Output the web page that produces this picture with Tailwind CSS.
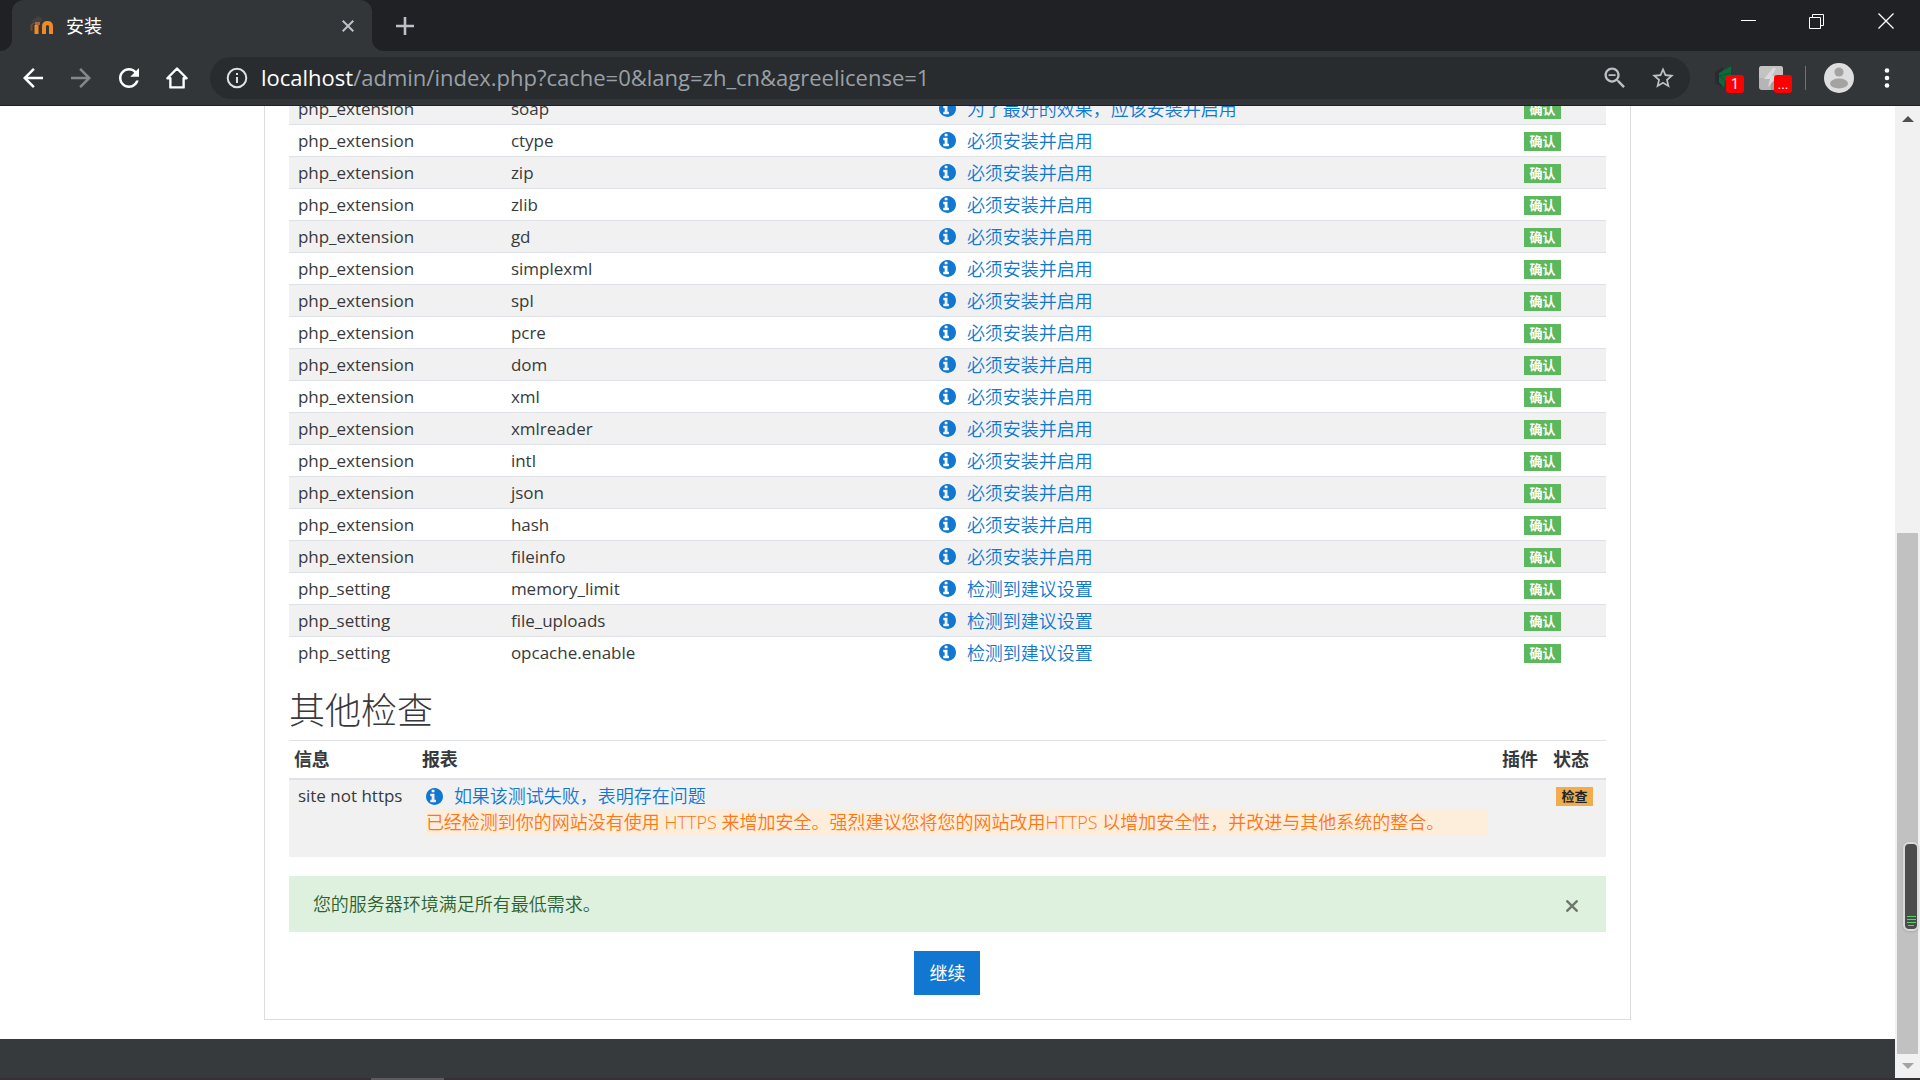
<!DOCTYPE html>
<html lang="zh-CN">
<head>
  <meta charset="UTF-8" />
  <meta name="viewport" content="width=device-width, initial-scale=1.0" />
  <title>安装</title>
  <script src="https://cdn.jsdelivr.net/npm/@tailwindcss/browser@4"></script>
</head>
<body class="h-screen overflow-hidden flex flex-col bg-white text-[#373a3c] text-[17px] font-['Open_Sans','Noto_Sans_CJK_SC',sans-serif]">

  <!-- info icon shared by every link -->
  <svg class="hidden">
    <symbol id="info" viewBox="128 128 1536 1536">
      <path d="M1024 1376v-160q0-14-9-23t-23-9h-96v-512q0-14-9-23t-23-9h-320q-14 0-23 9t-9 23v160q0 14 9 23t23 9h96v320h-96q-14 0-23 9t-9 23v160q0 14 9 23t23 9h448q14 0 23-9t9-23zM896 480v-160q0-14-9-23t-23-9h-192q-14 0-23 9t-9 23v160q0 14 9 23t23 9h192q14 0 23-9t9-23zM1664 896q0 209-103 385.500t-279.500 279.500-385.500 103-385.500-103-279.500-279.500-103-385.500 103-385.500 279.500-279.500 385.500-103 385.500 103 279.500 279.500 103 385.500z" fill="currentColor"/>
    </symbol>
  </svg>

  <!-- tab strip -->
  <header class="shrink-0 bg-[#323639] border-b border-[#202124]">
    <div class="flex h-[51px] bg-[#202124]">
      <div class="w-3 bg-[#323639]"><div class="h-full bg-[#202124] rounded-br-xl"></div></div>
      <div class="w-[360px] flex items-center pl-[18px] pr-3 bg-[#323639] rounded-t-xl text-white text-lg">
        <svg class="w-6 h-6 mr-3" viewBox="0 0 24 24" fill="none">
          <path d="M6.500 20v-9M14 20v-7.500q0-3.500 3.500-3.500t3.500 3.500V20" stroke="#f08a24" stroke-width="4"/>
          <path d="M1.500 17v-6l4-3" stroke="#6d4a35" stroke-width="2"/>
          <path d="M1 7l7-5 5 3-4 5-5-1z" fill="#45403f"/>
          <path d="M5 8h5v3H5z" fill="#a5683f"/>
        </svg>
        <span class="grow leading-6">安装</span>
        <button aria-label="关闭标签页" class="w-6 h-6 flex items-center justify-center">
          <svg class="w-3 h-3" viewBox="0 0 12 12" stroke="#bdc1c6" stroke-width="2"><path d="M.7.7l10.600 10.600M11.300.7L.7 11.300"/></svg>
        </button>
      </div>
      <div class="w-3 bg-[#323639]"><div class="h-full bg-[#202124] rounded-bl-xl"></div></div>
      <button aria-label="新标签页" class="w-[42px] flex items-center justify-center">
        <svg class="w-[18px] h-[18px]" viewBox="0 0 18 18" stroke="#bdc1c6" stroke-width="2.600"><path d="M9 0v18M0 9h18"/></svg>
      </button>
      <div class="ml-auto flex h-[41px] text-white">
        <button aria-label="最小化" class="w-[69px] flex items-center justify-center">
          <svg class="w-4 h-4" viewBox="0 0 16 16" stroke="currentColor"><path d="M1 7.500h15"/></svg>
        </button>
        <button aria-label="还原" class="w-[69px] flex items-center justify-center">
          <svg class="w-4 h-4" viewBox="0 0 16 16" fill="none" stroke="currentColor"><path d="M.5 4.500h11v11H.5zM3.500 4.500v-3h11v11h-3"/></svg>
        </button>
        <button aria-label="关闭" class="w-[69px] flex items-center justify-center">
          <svg class="w-4 h-4" viewBox="0 0 16 16" stroke="currentColor" stroke-width="1.300"><path d="M.5.5l15 15M15.500.5l-15 15"/></svg>
        </button>
      </div>
    </div>

    <!-- toolbar -->
    <div class="flex items-center h-[54px] pl-[9px] text-white">
      <button aria-label="后退" class="w-12 flex justify-center">
        <svg class="w-[30px] h-[30px]" viewBox="0 0 24 24" fill="currentColor"><path d="M20 11H7.830l5.590-5.590L12 4l-8 8 8 8 1.410-1.410L7.830 13H20v-2z"/></svg>
      </button>
      <button aria-label="前进" class="w-12 flex justify-center text-[#85888a]">
        <svg class="w-[30px] h-[30px]" viewBox="0 0 24 24" fill="currentColor"><path d="M12 4l-1.410 1.410L16.170 11H4v2h12.170l-5.580 5.590L12 20l8-8z"/></svg>
      </button>
      <button aria-label="重新加载" class="w-12 flex justify-center">
        <svg class="w-[30px] h-[30px]" viewBox="0 0 24 24" fill="currentColor"><path d="M17.650 6.350C16.200 4.900 14.210 4 12 4c-4.420 0-7.990 3.580-7.990 8s3.570 8 7.990 8c3.730 0 6.840-2.550 7.730-6h-2.080c-.82 2.330-3.040 4-5.650 4-3.310 0-6-2.690-6-6s2.690-6 6-6c1.660 0 3.140.69 4.220 1.780L13 11h7V4l-2.350 2.350z"/></svg>
      </button>
      <button aria-label="主页" class="w-12 flex justify-center">
        <svg class="w-[30px] h-[30px]" viewBox="0 0 24 24" fill="none" stroke="currentColor" stroke-width="1.900" stroke-linejoin="round"><path d="M4.300 12.200L12 4.400l7.700 7.800h-2.400v7.300H6.700v-7.300z"/></svg>
      </button>

      <div class="ml-[9px] grow flex items-center h-[42px] pl-[15px] pr-[15px] rounded-full bg-[#282c2f]">
        <svg class="w-6 h-6 text-[#dfe1e5]" viewBox="0 0 24 24" fill="none" stroke="currentColor" stroke-width="2"><circle cx="12" cy="12" r="9.300"/><path d="M12 11v6M12 7v2"/></svg>
        <div role="textbox" aria-label="地址" class="grow ml-3 pb-0.5 text-[22px] leading-7 text-[#9aa0a6]"><span class="text-white">localhost</span>/admin/index.php?cache=0&amp;lang=zh_cn&amp;agreelicense=1</div>
        <button aria-label="缩放" class="w-12 flex justify-center text-[#bdc1c6]">
          <svg class="w-7 h-7" viewBox="0 0 24 24" fill="currentColor"><path d="M15.500 14h-.79l-.28-.27C15.410 12.590 16 11.110 16 9.500 16 5.910 13.090 3 9.500 3S3 5.910 3 9.500 5.910 16 9.500 16c1.610 0 3.090-.59 4.230-1.570l.27.28v.79l5 4.990L20.490 19l-4.990-5zm-6 0C7.010 14 5 11.990 5 9.500S7.010 5 9.500 5 14 7.010 14 9.500 11.990 14 9.500 14zM6.500 8.700h6v1.500h-6z"/></svg>
        </button>
        <button aria-label="收藏" class="w-12 -mr-3 flex justify-center text-[#bdc1c6]">
          <svg class="w-[26px] h-[26px]" viewBox="0 0 24 24" fill="currentColor"><path d="M22 9.240l-7.190-.62L12 2 9.190 8.630 2 9.240l5.460 4.730L5.820 21 12 17.270 18.180 21l-1.630-7.030L22 9.240zM12 15.400l-3.760 2.270 1-4.280-3.320-2.880 4.380-.38L12 6.100l1.710 4.040 4.380.38-3.320 2.880 1 4.280L12 15.400z"/></svg>
        </button>
      </div>

      <div class="flex items-center w-[230px] pl-6 pr-[18px]">
        <button aria-label="扩展程序" class="relative w-[30px] h-[30px]">
          <svg class="w-6 h-6" viewBox="0 0 24 24"><path d="M1 6l8-5v4L5 8v7l5 7-9-5z" fill="#282c2f"/><path d="M17 0v12l-6 3-1 7-5-6V7z" fill="#0b6b3a"/><path d="M5 10l12-3M11 15L6 10" stroke="#0a5530"/></svg>
          <span class="absolute left-3 top-3 w-[18px] h-[18px] rounded-[3px] bg-[#f00] text-white text-sm leading-[18px] font-[Roboto,sans-serif]">1</span>
        </button>
        <button aria-label="扩展程序" class="relative ml-[15px] w-[30px] h-[30px]">
          <svg class="w-6 h-6" viewBox="0 0 24 24"><rect width="24" height="24" rx="3" fill="#b5b5b5"/><path d="M0 12V3q0-3 3-3h18q3 0 3 3v9z" fill="#c3c3c3"/><path d="M12 12h12v9q0 3-3 3h-9z" fill="#a0a0a0"/><path d="M14 2L5 13h6L9 21l10-11h-6l4-8z" fill="#dadada"/></svg>
          <span class="absolute left-[15px] top-3 w-[18px] h-[18px] rounded-[3px] bg-[#f00] text-white text-sm leading-[18px] font-[Roboto,sans-serif]">...</span>
        </button>
        <div class="ml-4 mr-[18px] w-px h-6 bg-[#6f7275]"></div>
        <button aria-label="用户" class="w-[30px] h-[30px]">
          <svg class="w-full h-full" viewBox="0 0 30 30"><circle cx="15" cy="15" r="15" fill="#dedede"/><circle cx="15" cy="9" r="4.600" fill="#a3a3a3"/><ellipse cx="15" cy="20.500" rx="9" ry="5" fill="#a3a3a3"/></svg>
        </button>
        <button aria-label="菜单" class="ml-auto w-[30px] h-[30px] flex justify-center">
          <svg class="h-full" viewBox="0 0 6 30" fill="currentColor"><circle cx="3" cy="7.500" r="2.300"/><circle cx="3" cy="15" r="2.300"/><circle cx="3" cy="22.500" r="2.300"/></svg>
        </button>
      </div>
    </div>
  </header>

  <div class="grow min-h-0 flex">
    <!-- page, scrolled to its end -->
    <div class="grow flex flex-col justify-end overflow-hidden">
      <main class="shrink-0 w-[72.15%] mx-auto mb-[19px] p-6 border border-[#dcdddf]">
        <table class="w-full table-fixed">
          <colgroup>
            <col class="w-[213px]" /><col class="w-[428px]" /><col /><col class="w-[91px]" />
          </colgroup>
          <tbody id="checks"></tbody>
        </table>

        <h2 class="mt-5 mb-[7px] text-4xl leading-[44px] font-light">其他检查</h2>
        <table class="w-full table-fixed border-t border-[#dee2e6]">
          <colgroup>
            <col class="w-[128px]" /><col /><col class="w-[51px]" /><col class="w-[58px]" />
          </colgroup>
          <thead>
            <tr class="h-[39px] border-b-2 border-[#dee2e6] text-left text-lg">
              <th class="px-[5px] py-0">信息</th>
              <th class="px-[5px] py-0">报表</th>
              <th class="px-[5px] py-0">插件</th>
              <th class="px-[5px] py-0">状态</th>
            </tr>
          </thead>
          <tbody>
            <tr class="bg-[#f1f1f1] align-top leading-[26px]">
              <td class="px-[9px] pt-[3px] whitespace-nowrap">site not https</td>
              <td class="px-[9px] pt-[3px] pb-[22px] text-lg leading-[26px] font-[350]">
                <a href="#" class="flex items-center text-[#1177d1]"><svg class="w-[17px] h-[17px] mr-[11px]"><use href="#info"/></svg>如果该测试失败，表明存在问题</a>
                <p class="bg-[#fdeedb] text-[#ff7518] whitespace-nowrap">已经检测到你的网站没有使用 <span class="font-light">HTTPS</span> 来增加安全。强烈建议您将您的网站改用<span class="font-light">HTTPS</span> 以增加安全性，并改进与其他系统的整合。</p>
              </td>
              <td></td>
              <td class="px-2 pt-[7px]"><span class="block w-[37px] h-[19px] bg-[#f0ad4e] text-[#212529] text-[13px] leading-[19px] font-bold text-center">检查</span></td>
            </tr>
          </tbody>
        </table>

        <div role="alert" class="mt-[19px] h-14 pl-6 pr-7 flex items-center justify-between bg-[#def1de] text-[#306030] text-lg font-[350]">
          您的服务器环境满足所有最低需求。
          <button aria-label="关闭" class="mt-1">
            <svg class="w-3 h-3" viewBox="0 0 12 12" stroke="#6f796f" stroke-width="2.400"><path d="M.5.5l11 11M11.500.5l-11 11"/></svg>
          </button>
        </div>

        <button class="block mt-[19px] mx-auto h-11 px-[15px] bg-[#1177d1] text-white text-lg">继续</button>
      </main>
      <footer class="shrink-0 h-[39px] bg-[#373a3c]"></footer>
    </div>

    <!-- scrollbar -->
    <div class="relative w-[25px] shrink-0 flex flex-col items-center bg-[#f1f1f1]">
      <svg class="mt-2.5 w-3 h-1.5" viewBox="0 0 12 6"><path d="M0 6l6-6 6 6z" fill="#505050"/></svg>
      <div class="mt-auto h-[521px] w-[21px] bg-[#c1c1c1]"></div>
      <svg class="my-[9px] w-3 h-1.5" viewBox="0 0 12 6"><path d="M0 0l6 6 6-6z" fill="#a3a3a3"/></svg>
      <!-- floating monitor widget -->
      <div class="absolute right-px bottom-[147px] w-4 h-[89px] flex flex-col items-center justify-end gap-0.5 pb-[3px] rounded-md border-2 border-[#dadada] bg-[#4c4c4c] shadow">
        <i class="w-[9px] h-px bg-[#4cd964]"></i>
        <i class="w-[9px] h-px bg-[#4cd964]"></i>
        <i class="w-[9px] h-px bg-[#4cd964]"></i>
        <i class="w-1.5 h-px bg-[#4cd964]"></i>
      </div>
    </div>
  </div>

  <div class="shrink-0 h-0.5 bg-[#353132] pl-[371px]"><div class="w-[73px] h-full bg-[#5d5b5b]"></div></div>

  <script>
    const required = "必须安装并启用";
    const recommended = "检测到建议设置";

    const checks = [
      ["php_extension", "soap", "为了最好的效果，应该安装并启用"],
      ["php_extension", "ctype", required],
      ["php_extension", "zip", required],
      ["php_extension", "zlib", required],
      ["php_extension", "gd", required],
      ["php_extension", "simplexml", required],
      ["php_extension", "spl", required],
      ["php_extension", "pcre", required],
      ["php_extension", "dom", required],
      ["php_extension", "xml", required],
      ["php_extension", "xmlreader", required],
      ["php_extension", "intl", required],
      ["php_extension", "json", required],
      ["php_extension", "hash", required],
      ["php_extension", "fileinfo", required],
      ["php_setting", "memory_limit", recommended],
      ["php_setting", "file_uploads", recommended],
      ["php_setting", "opcache.enable", recommended]
    ];

    document.getElementById("checks").innerHTML = checks.map(([name, info, report]) => `
      <tr class="h-8 border-t border-[#dee2e6] odd:bg-[#f1f1f1] leading-[26px]">
        <td class="px-[9px] py-0">${name}</td>
        <td class="px-[9px] py-0">${info}</td>
        <td class="px-[9px] py-0"><a href="#" class="flex items-center text-lg leading-[26px] font-[350] text-[#1177d1]"><svg class="w-[17px] h-[17px] mr-[11px]"><use href="#info"/></svg>${report}</a></td>
        <td class="px-[9px] pt-0.5 pb-0"><span class="block w-[37px] h-[19px] bg-[#5cb85c] text-white text-[13px] leading-[19px] font-bold text-center">确认</span></td>
      </tr>`).join("");
  </script>
</body>
</html>
